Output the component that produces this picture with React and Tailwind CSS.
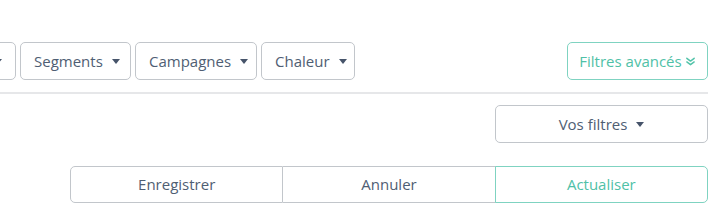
import React from "react";

const Caret = () => (
  <span className="inline-block w-0 h-0 border-l-[4.5px] border-r-[4.5px] border-t-[5px] border-l-transparent border-r-transparent border-t-[#46546a]" />
);

const DoubleChevron = () => (
  <svg width="11" height="11" viewBox="0 0 12 12" fill="none" stroke="#52c3a9" strokeWidth="1.6" strokeLinecap="round" strokeLinejoin="round">
    <path d="M2 2.5 L6 5.5 L10 2.5" />
    <path d="M2 6.5 L6 9.5 L10 6.5" />
  </svg>
);

const DropButton = ({ label, className = "" }) => (
  <button className={`h-[38px] flex items-center gap-[9px] px-[13px] border border-[#c2c6cb] rounded-[5px] bg-white text-[#4f5e73] text-[15px] ${className}`}>
    {label && <span>{label}</span>}
    <Caret />
  </button>
);

export default function App() {
  return (
    <div
      className="w-[728px] h-[214px] bg-white overflow-hidden"
      style={{ fontFamily: '"Open Sans", "Liberation Sans", sans-serif' }}
    >
      <div className="w-[708px] pt-[42px]">
        {/* Top filter row */}
        <div className="flex items-start justify-between">
          <div className="flex gap-1 ml-[-84px]">
            <DropButton className="w-[100px] justify-end" />
            <DropButton label="Segments" className="w-[111px]" />
            <DropButton label="Campagnes" className="w-[122px]" />
            <DropButton label="Chaleur" className="w-[94px]" />
          </div>
          <button className="h-[38px] w-[141px] flex items-center justify-center gap-[3px] border border-[#7fd3c1] rounded-[5px] bg-white text-[#4fc1a7] text-[15px]">
            <span>Filtres avancés</span>
            <DoubleChevron />
          </button>
        </div>

        <div className="mt-[12px] h-[2px] bg-[#e6e7e9]" />

        {/* Saved filters */}
        <div className="flex justify-end mt-[11px]">
          <button className="h-[38px] w-[213px] flex items-center justify-center gap-[9px] border border-[#c2c6cb] rounded-[5px] bg-white text-[#4f5e73] text-[15px]">
            <span>Vos filtres</span>
            <Caret />
          </button>
        </div>

        {/* Actions */}
        <div className="flex justify-end mt-[23px]">
          <div className="flex w-[638px] h-[37px] text-[15px]">
            <button className="flex-1 border border-[#c2c6cb] rounded-l-[5px] text-[#4f5e73] bg-white">
              Enregistrer
            </button>
            <button className="flex-1 border-y border-r border-[#c2c6cb] text-[#4f5e73] bg-white">
              Annuler
            </button>
            <button className="flex-1 border border-[#7fd3c1] rounded-r-[5px] text-[#4fc1a7] bg-white ml-[-1px]">
              Actualiser
            </button>
          </div>
        </div>
      </div>
    </div>
  );
}
